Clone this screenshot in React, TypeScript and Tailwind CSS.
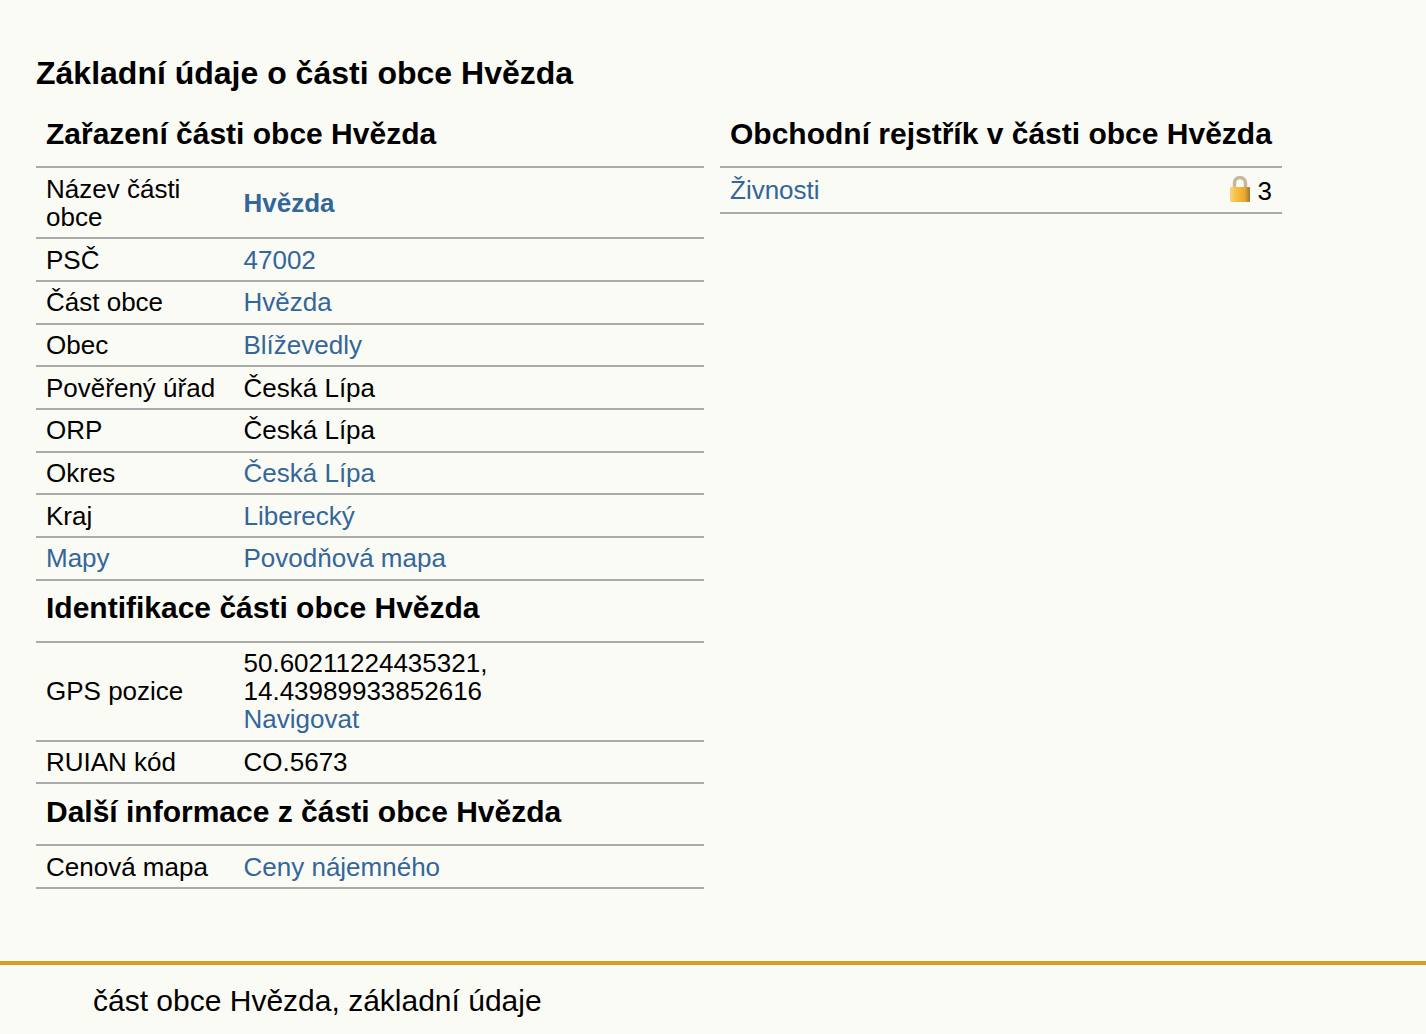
const A = ({ children, bold }: { children: React.ReactNode; bold?: boolean }) => (
  <a href="#" className={`text-[#336699] ${bold ? "font-bold" : ""}`}>{children}</a>
);

const Row = ({ label, children, h = "h-[42.67px]" }: { label: React.ReactNode; children: React.ReactNode; h?: string }) => (
  <div className={`flex items-center border-b-2 border-[#aaaaaa] ${h}`}>
    <div className="w-[207.5px] shrink-0 pl-[10px] pr-2">{label}</div>
    <div className="flex-1">{children}</div>
  </div>
);

const Heading = ({ children }: { children: React.ReactNode }) => (
  <div className="flex h-[62px] items-center border-b-2 border-[#aaaaaa] pb-[5px] pl-[10px] text-[30px] font-bold">{children}</div>
);

const Lock = () => (
  <svg width="20" height="26" viewBox="0 0 20 26" className="mb-[3px] shrink-0">
    <defs>
      <linearGradient id="body" x1="0" x2="1" y1="0" y2="0">
        <stop offset="0" stopColor="#f6d48a" />
        <stop offset="0.3" stopColor="#f9c040" />
        <stop offset="0.75" stopColor="#eaa82c" />
        <stop offset="1" stopColor="#9c7433" />
      </linearGradient>
    </defs>
    <path d="M4.5 12V7a5.5 5.5 0 0 1 11 0v5" fill="none" stroke="#c6b89c" strokeWidth="3.5" />
    <rect x="0" y="11" width="20" height="15" rx="1" fill="url(#body)" />
  </svg>
);

export default function App() {
  return (
    <div className="min-h-[1034px] bg-[#fbfbf6] text-[26px] leading-[28px] text-black" style={{ fontFamily: '"Liberation Sans", Arial, sans-serif' }}>
      <div className="pl-9 pt-[55px] pr-[144px]">
        <h1 className="h-[36px] text-[32px] font-bold leading-[36px]">Základní údaje o části obce Hvězda</h1>
        <div className="mt-[15.4px] flex gap-4">
          <div className="w-[668px]">
            <Heading>Zařazení části obce Hvězda</Heading>
            <Row label={<>Název části<br />obce</>} h="h-[71px]"><A bold>Hvězda</A></Row>
            <Row label="PSČ"><A>47002</A></Row>
            <Row label="Část obce"><A>Hvězda</A></Row>
            <Row label="Obec"><A>Blíževedly</A></Row>
            <Row label="Pověřený úřad">Česká Lípa</Row>
            <Row label="ORP">Česká Lípa</Row>
            <Row label="Okres"><A>Česká Lípa</A></Row>
            <Row label="Kraj"><A>Liberecký</A></Row>
            <Row label={<A>Mapy</A>}><A>Povodňová mapa</A></Row>
            <Heading>Identifikace části obce Hvězda</Heading>
            <Row label="GPS pozice" h="h-[99px]">50.60211224435321,<br />14.43989933852616<br /><A>Navigovat</A></Row>
            <Row label="RUIAN kód">CO.5673</Row>
            <Heading>Další informace z části obce Hvězda</Heading>
            <Row label="Cenová mapa"><A>Ceny nájemného</A></Row>
          </div>
          <div className="w-[562px]">
            <Heading>Obchodní rejstřík v části obce Hvězda</Heading>
            <div className="flex h-[46px] items-center justify-between border-b-2 border-[#aaaaaa] px-[10px]">
              <A>Živnosti</A>
              <span className="flex items-center gap-[8px]"><Lock /><span className="pt-[2px]">3</span></span>
            </div>
          </div>
        </div>
      </div>
      <div className="mt-[71.6px] border-t-4 border-[#d4a127] pl-[93px] pt-[19px] text-[30px] leading-[34px]">část obce Hvězda, základní údaje</div>
    </div>
  );
}
